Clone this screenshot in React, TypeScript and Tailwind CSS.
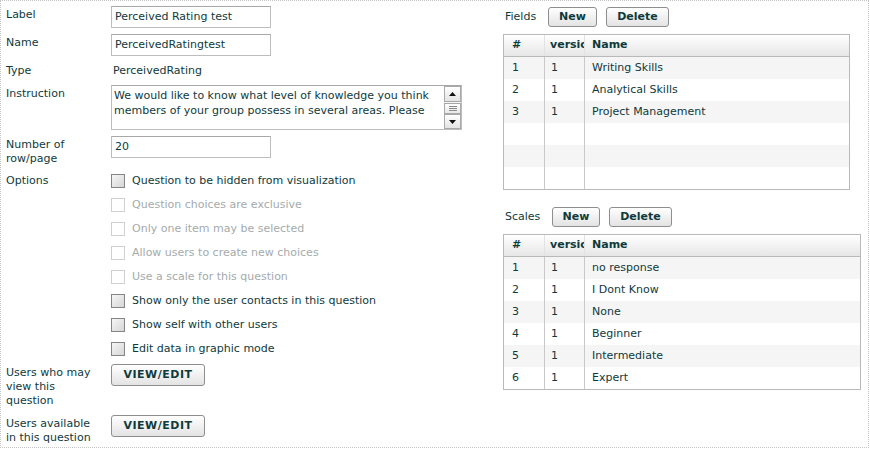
import React from "react";

type Opt = { text: string; disabled?: boolean };

const options: Opt[] = [
  { text: "Question to be hidden from visualization" },
  { text: "Question choices are exclusive", disabled: true },
  { text: "Only one item may be selected", disabled: true },
  { text: "Allow users to create new choices", disabled: true },
  { text: "Use a scale for this question", disabled: true },
  { text: "Show only the user contacts in this question" },
  { text: "Show self with other users" },
  { text: "Edit data in graphic mode" },
];

const fields = ["Writing Skills", "Analytical Skills", "Project Management"];
const scales = ["no response", "I Dont Know", "None", "Beginner", "Intermediate", "Expert"];

function Btn({ children, className }: { children: React.ReactNode; className: string }) {
  return (
    <button className={`flex items-center justify-center rounded-[3px] border border-[#8e8e8e] bg-gradient-to-b from-white to-[#e3e3e3] font-bold text-[#0f3a3c] ${className}`}>
      {children}
    </button>
  );
}

function Checkbox({ disabled }: { disabled?: boolean }) {
  return (
    <span
      className={
        disabled
          ? "w-[14px] h-[14px] border border-[#d0d0d0] bg-white"
          : "w-[14px] h-[14px] border border-[#858585] bg-gradient-to-br from-[#f6f6f6] to-[#d6d6d6]"
      }
    />
  );
}

function Row({ label, children, className = "" }: { label: React.ReactNode; children: React.ReactNode; className?: string }) {
  return (
    <div className={`flex items-start ${className}`}>
      <div className="w-[105px] shrink-0 pr-[5px] pt-[2px] leading-[14px]">{label}</div>
      <div className="flex-1">{children}</div>
    </div>
  );
}

function Input({ value }: { value: string }) {
  return (
    <div className="w-[160px] h-[22px] border border-[#bdbdbd] border-t-[#a8a8a8] bg-white pl-[3px] flex items-center">
      {value}
    </div>
  );
}

function Arrow({ up }: { up?: boolean }) {
  return (
    <svg width="7" height="4" viewBox="0 0 7 4">
      {up ? <path d="M0 4 L3.5 0 L7 4 Z" fill="#111" /> : <path d="M0 0 L3.5 4 L7 0 Z" fill="#111" />}
    </svg>
  );
}

function Grid({ rows, width }: { rows: string[]; width: string }) {
  const lines = [...rows];
  while (lines.length < 6) lines.push("");
  return (
    <div className={`${width} border border-[#b9b9b9] bg-white`}>
      <div className="grid grid-cols-[41px_40px_1fr] h-[22px] border-b border-[#b9b9b9] bg-gradient-to-b from-white to-[#e6e6e6] font-bold">
        <div className="pl-[8px] flex items-center border-r border-[#e2e2e2]">#</div>
        <div className="pl-[5px] flex items-center border-r border-[#e2e2e2] overflow-hidden whitespace-nowrap">version</div>
        <div className="pl-[7px] flex items-center">Name</div>
      </div>
      {lines.map((name, i) => (
        <div key={i} className={`grid grid-cols-[41px_40px_1fr] h-[22px] ${i % 2 === 0 ? "bg-[#f5f5f5]" : "bg-white"}`}>
          <div className="pl-[8px] flex items-center border-r border-[#c9c9c9]">{name ? i + 1 : ""}</div>
          <div className="pl-[6px] flex items-center border-r border-[#c9c9c9]">{name ? 1 : ""}</div>
          <div className="pl-[7px] flex items-center">{name}</div>
        </div>
      ))}
    </div>
  );
}

export default function App() {
  return (
    <div className="w-[869px] h-[448px] bg-white">
      <div
        className="flex w-[869px] h-[448px] border border-dotted border-[#c4c4c4] text-[11px] text-[#0f3a3c]"
        style={{ fontFamily: '"DejaVu Sans", Verdana, sans-serif' }}
      >
        {/* left form */}
        <div className="w-[502px] shrink-0 pl-[5px] pt-[5px]">
          <Row label="Label">
            <Input value="Perceived Rating test" />
          </Row>
          <Row label="Name" className="mt-[6px]">
            <Input value="PerceivedRatingtest" />
          </Row>
          <Row label="Type" className="mt-[6px]">
            <div className="pl-[2px] pt-[2px] leading-[14px]">PerceivedRating</div>
          </Row>
          <Row label="Instruction" className="mt-[7px]">
            <div className="w-[351px] h-[45px] border border-[#bdbdbd] border-t-[#a8a8a8] bg-white flex">
              <div className="flex-1 pl-[2px] pt-[2px] leading-[15px] overflow-hidden whitespace-nowrap">
                <div>We would like to know what level of knowledge you think</div>
                <div>members of your group possess in several areas. Please</div>
              </div>
              <div className="w-[17px] flex flex-col bg-[#f4f4f4]">
                <div className="h-[16px] border border-[#a9a9a9] bg-gradient-to-b from-white to-[#e4e4e4] flex items-center justify-center">
                  <Arrow up />
                </div>
                <div className="h-[11px] mt-[1px] border border-[#a9a9a9] bg-gradient-to-b from-white to-[#e8e8e8] flex items-center justify-center">
                  <svg width="8" height="5" viewBox="0 0 8 5">
                    <path d="M0 0.5 H8 M0 2.5 H8 M0 4.5 H8" stroke="#8a8a8a" strokeWidth="1" />
                  </svg>
                </div>
                <div className="flex-1" />
                <div className="h-[15px] border border-[#a9a9a9] bg-gradient-to-b from-white to-[#e4e4e4] flex items-center justify-center">
                  <Arrow />
                </div>
              </div>
            </div>
          </Row>
          <Row label={<>Number of<br />row/page</>} className="mt-[6px]">
            <Input value="20" />
          </Row>
          <div className="flex items-start mt-[3px]">
            <div className="w-[105px] shrink-0 leading-[24px]">Options</div>
            <div className="flex-1">
              {options.map((o) => (
                <div key={o.text} className="h-[24px] flex items-center gap-[7px]">
                  <Checkbox disabled={o.disabled} />
                  <span className={o.disabled ? "text-[#a4abab]" : ""}>{o.text}</span>
                </div>
              ))}
            </div>
          </div>
          <Row label={<>Users who may<br />view this<br />question</>} className="mt-[3px]">
            <Btn className="w-[94px] h-[22px] tracking-[0.5px]">VIEW/EDIT</Btn>
          </Row>
          <Row label={<>Users available<br />in this question</>} className="mt-[7px]">
            <Btn className="w-[94px] h-[22px] tracking-[0.5px]">VIEW/EDIT</Btn>
          </Row>
        </div>

        {/* right tables */}
        <div className="flex-1 pt-[6px]">
          <div className="flex items-center h-[20px]">
            <span className="w-[45px] pl-[2px]">Fields</span>
            <Btn className="w-[49px] h-[20px]">New</Btn>
            <Btn className="w-[63px] h-[20px] ml-[9px]">Delete</Btn>
          </div>
          <div className="mt-[7px]">
            <Grid rows={fields} width="w-[347px]" />
          </div>
          <div className="flex items-center h-[20px] mt-[17px]">
            <span className="w-[49px] pl-[2px]">Scales</span>
            <Btn className="w-[48px] h-[20px]">New</Btn>
            <Btn className="w-[63px] h-[20px] ml-[9px]">Delete</Btn>
          </div>
          <div className="mt-[7px]">
            <Grid rows={scales} width="w-[358px]" />
          </div>
        </div>
      </div>
    </div>
  );
}
